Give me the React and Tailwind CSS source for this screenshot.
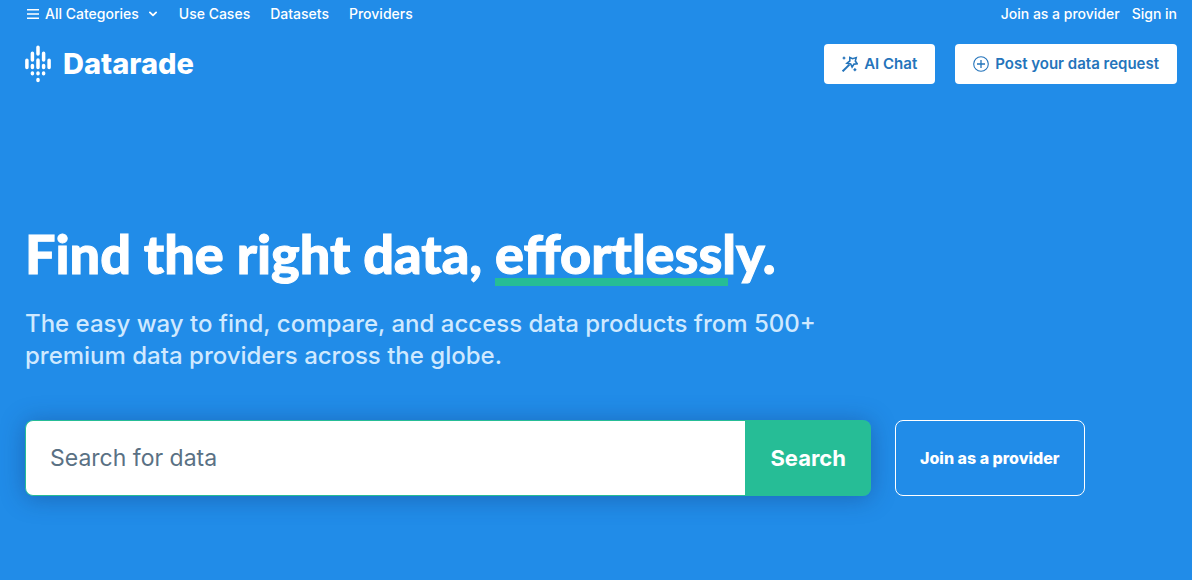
function MenuIcon() {
  return (
    <svg className="h-3 w-3" viewBox="0 0 12 12" fill="none" stroke="currentColor" strokeWidth="1.5" aria-hidden="true">
      <path d="M0 1.75h12M0 6h12M0 10.25h12" />
    </svg>
  );
}

function ChevronIcon() {
  return (
    <svg className="h-2 w-2" viewBox="0 0 8 8" fill="none" stroke="currentColor" strokeWidth="1.8" strokeLinecap="round" strokeLinejoin="round" aria-hidden="true">
      <path d="M0.9 2.4 4 5.4l3.1-3" />
    </svg>
  );
}

function LogoMark() {
  return (
    <svg className="h-[38px] w-[26px]" viewBox="0 0 26 38" fill="none" stroke="currentColor" strokeWidth="3.5" strokeLinecap="round" aria-hidden="true">
      <path d="M1.9 15.3v7.2M24.1 15.3v7.2M7.4 8.3v6.8M18.6 8.3v6.8M13 2.2v6.9M13 15v7.5" />
      <path d="M7.4 20.4v2M18.6 20.4v2M7.4 27.9v.9M18.6 27.9v.9M13 27.9v.9M13 34.6v.9" />
    </svg>
  );
}

function WandIcon() {
  return (
    <svg className="h-4 w-4" viewBox="0 0 16 16" fill="none" stroke="currentColor" aria-hidden="true">
      <path d="M.6 15.4 7.4 8.6" strokeWidth="2" />
      <path d="M7.8 1.4 10.6 2.7 14.2 1.6 13.3 5 15.1 7.7 12 8.1 10.1 11 8.7 7.9 5 7.2 7.8 5z" strokeWidth="1.6" strokeLinejoin="miter" />
      <path d="m2 .6 1.5 1.5L2 3.6.5 2.1zM12.9 12.1l1.6 1.6-1.6 1.6-1.6-1.6z" fill="currentColor" strokeWidth="0.3" />
    </svg>
  );
}

function PlusCircleIcon() {
  return (
    <svg className="h-4 w-4" viewBox="0 0 16 16" fill="none" stroke="currentColor" strokeWidth="1.1" aria-hidden="true">
      <circle cx="8" cy="8" r="7.3" />
      <path d="M8 4v8M4 8h8" strokeWidth="1.3" />
    </svg>
  );
}

export default function App() {
  return (
    <div className="min-h-screen bg-[#218ce8] pr-[15px] pl-[25px] font-['Inter',sans-serif] text-white">
      <header>
        <div className="flex h-7 items-center justify-between text-sm font-medium">
          <nav className="flex items-center gap-5" aria-label="Main">
            <button type="button" className="flex items-center gap-1.5 pl-0.5">
              <MenuIcon />
              All Categories
              <span className="flex pr-0.5 pl-1">
                <ChevronIcon />
              </span>
            </button>
            <a href="#use-cases">Use Cases</a>
            <a href="#datasets">Datasets</a>
            <a href="#providers">Providers</a>
          </nav>
          <div className="flex items-center gap-3">
            <a href="#join">Join as a provider</a>
            <a href="#sign-in">Sign in</a>
          </div>
        </div>
        <div className="mt-4 flex h-10 items-center justify-between">
          <a href="#home" className="flex items-center gap-3 text-[29px] leading-8 font-extrabold">
            <LogoMark />
            Datarade
          </a>
          <div className="flex items-center gap-5 font-semibold text-[#2474bb]">
            <button type="button" className="flex h-10 items-center gap-1.5 rounded bg-white px-[18px] text-[15px]">
              <WandIcon />
              AI Chat
            </button>
            <button type="button" className="flex h-10 items-center gap-1.5 rounded bg-white px-[18px] text-[15px]">
              <PlusCircleIcon />
              Post your data request
            </button>
          </div>
        </div>
      </header>

      <main className="pt-[138px]">
        <h1 className="font-['Lato',sans-serif] text-[54px] leading-[64px] font-black [-webkit-text-stroke:1px_white]">
          Find the right data,{" "}
          <span className="relative z-0 inline-block">
            <span className="absolute bottom-0 left-0 -z-10 h-2 w-[83%] bg-[#26bd96]" />
            effortlessly.
          </span>
        </h1>
        <p className="mt-[22px] max-w-[840px] text-2xl leading-8 font-medium text-[#cfe9ff]">
          The easy way to find, compare, and access data products from 500+ premium data providers across the globe.
        </p>
        <div className="mt-12 flex flex-wrap items-center gap-6">
          <form
            className="flex h-[76px] w-full max-w-[846px] overflow-hidden rounded-lg shadow-[0_2px_24px_rgba(20,50,110,0.4)]"
            onSubmit={(event) => event.preventDefault()}
          >
            <input
              type="text"
              aria-label="Search for data"
              placeholder="Search for data"
              className="min-w-0 flex-1 rounded-l-lg border border-r-0 border-[#26bd96] bg-white px-6 text-[23px] text-[#5a7184] outline-none placeholder:text-[#5a7184]"
            />
            <button type="submit" className="bg-[#26bd96] px-[25px] text-[22px] font-bold">
              Search
            </button>
          </form>
          <a href="#join" className="flex h-[76px] items-center rounded-lg border border-white px-6 text-base font-extrabold">
            Join as a provider
          </a>
        </div>
      </main>
    </div>
  );
}
